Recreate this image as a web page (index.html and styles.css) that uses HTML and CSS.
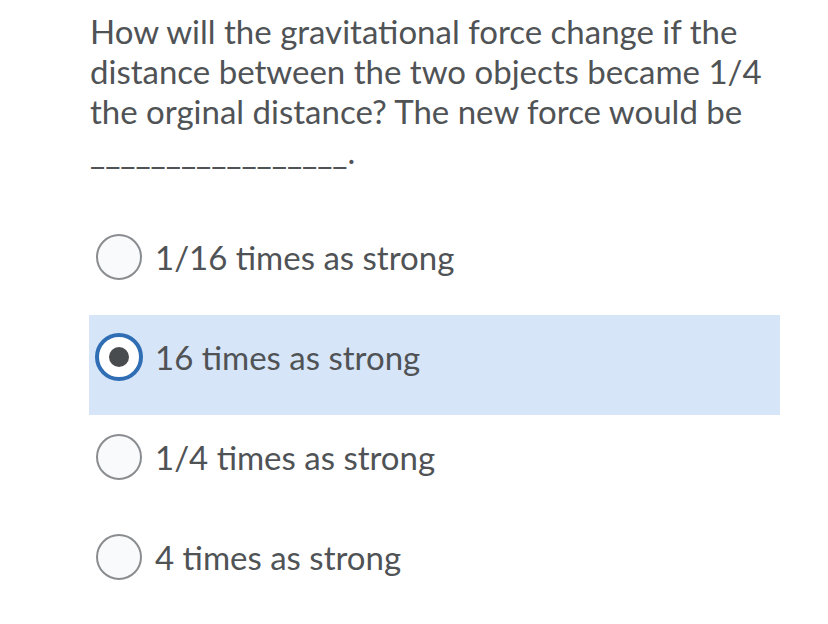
FILE: index.html
```html
<!DOCTYPE html>
<html lang="en">
<head>
    <meta charset="UTF-8" />
    <title>Question</title>
    <link rel="stylesheet" href="styles.css">
</head>
<body>
<div class="question">
    <p class="prompt">How will the gravitational force change if the distance between the two objects became 1/4 the orginal distance? The new force would be _________________.</p>
    <div class="options">
        <label class="option">
            <span class="radio"></span>
            <span class="answer">1/16 times as strong</span>
        </label>
        <label class="option selected">
            <span class="radio"></span>
            <span class="answer">16 times as strong</span>
        </label>
        <label class="option">
            <span class="radio"></span>
            <span class="answer">1/4 times as strong</span>
        </label>
        <label class="option">
            <span class="radio"></span>
            <span class="answer">4 times as strong</span>
        </label>
    </div>
</div>
</body>
</html>
```

FILE: styles.css
```css
body {
    margin: 0;
    background: #fff;
    font-family: Lato, "Open Sans", sans-serif;
    color: #505356;
}
.question {
    margin-left: 89px;
    width: 691px;
    padding-top: 11px;
}
.prompt {
    margin: 0 0 0 1px;
    font-size: 33px;
    font-weight: 400;
    line-height: 40px;
}
.options {
    margin-top: 44px;
}
.option {
    display: flex;
    align-items: center;
    gap: 13px;
    height: 46px;
    padding: 19px 7px 35px;
    font-size: 33px;
}
.option.selected {
    background-color: #d6e5f7;
}
.radio {
    box-sizing: border-box;
    width: 46px;
    height: 46px;
    border-radius: 50%;
    border: 2px solid #8a8d90;
    background: #f9fafc;
    flex-shrink: 0;
}
.selected .radio {
    width: 48px;
    height: 48px;
    margin: 0 -1px 0 -1px;
    border: 4px solid #2f6db4;
    background: #fff;
    display: flex;
    align-items: center;
    justify-content: center;
}
.selected .radio::after {
    content: "";
    width: 20px;
    height: 20px;
    border-radius: 50%;
    background: #494c4e;
}
```
